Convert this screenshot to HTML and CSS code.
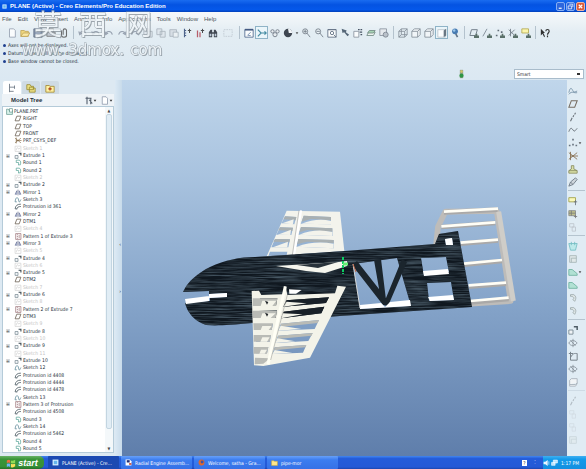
FILE: index.html
```html
<!DOCTYPE html>
<html lang="en">
<head>
<meta charset="utf-8">
<title>PLANE (Active) - Creo Elements/Pro Education Edition</title>
<link rel="stylesheet" href="styles.css">
</head>
<body>
<svg class="defs" aria-hidden="true">
  <symbol id="new" viewBox="0 0 12 12"><path d="M3 1h5l2 2v8H3z" fill="#fff" stroke="#8793a5"/></symbol>
  <symbol id="open" viewBox="0 0 12 12"><path d="M1 10V3h4l1 1h4v6z" fill="#f2d36a" stroke="#b9973c"/><path d="M1 10l3-4h8l-3 4z" fill="#ffe998" stroke="#b9973c"/></symbol>
  <symbol id="save" viewBox="0 0 12 12"><path d="M1 1h10v10H1z" fill="#71829d" stroke="#4d5c75"/><path d="M3 1h6v4H3zM3 7h6v4H3z" fill="#eef3f8"/></symbol>
  <symbol id="print" viewBox="0 0 12 12"><path d="M3 1h6v4H3z" fill="#fff" stroke="#777"/><path d="M1 5h10v5H1z" fill="#b9c0ca" stroke="#666"/></symbol>
  <symbol id="clip" viewBox="0 0 12 12"><path d="M3 3v6a3 2 0 006 0V3a2 2 0 00-4 0v5" fill="none" stroke="#555" stroke-width="1.3"/></symbol>
  <symbol id="undo" viewBox="0 0 12 12"><path d="M2 7c1-4 7-4 8 1M1 4l1 4 3-2" fill="none" stroke="#8b95a5" stroke-width="1.3"/></symbol>
  <symbol id="redo" viewBox="0 0 12 12"><path d="M10 7C9 3 3 3 2 8M11 4l-1 4-3-2" fill="none" stroke="#8b95a5" stroke-width="1.3"/></symbol>
  <symbol id="copy" viewBox="0 0 12 12"><path d="M1 1h6v7H1zM5 4h6v7H5z" fill="#dfe6ec" stroke="#a0a9b3"/></symbol>
  <symbol id="paste" viewBox="0 0 12 12"><path d="M1 2h8v8H1z" fill="#d5dce3" stroke="#a0a9b3"/><path d="M5 5h6v6H5z" fill="#edf1f4" stroke="#a0a9b3"/></symbol>
  <symbol id="regen" viewBox="0 0 12 12"><path d="M3 1v10M3 3h2M3 6h2M3 9h2" stroke="#334a78" stroke-width="1.4"/><path d="M7 3h4M9 1v5" stroke="#333" stroke-width="1.2"/></symbol>
  <symbol id="regen-red" viewBox="0 0 12 12"><path d="M3 3v8M6 5v6" stroke="#b04552" stroke-width="1.5"/><path d="M7 3h4M9 1v5" stroke="#333" stroke-width="1.2"/></symbol>
  <symbol id="find" viewBox="0 0 12 12"><path d="M1 11V5l2-3h2v3h2V2h2l2 3v6H7V7H5v4z" fill="#252b36"/><path d="M2 7h2v3H2zM8 7h2v3H8z" fill="#b9c6d6"/></symbol>
  <symbol id="dots" viewBox="0 0 12 12"><path d="M1 2h10v8H1z" fill="none" stroke="#b9c3cb" stroke-dasharray="2 1"/></symbol>
  <symbol id="repaint" viewBox="0 0 12 12"><path d="M1 2h10v9H1z" fill="#fff" stroke="#35507c"/><path d="M1 2h10" stroke="#27416f" stroke-width="2"/><path d="M4 9l4-4M5 9h3" stroke="#56739e" fill="none"/></symbol>
  <symbol id="spin" viewBox="0 0 12 12"><path d="M1 2l4 4-4 4M5 6h6M9 4l2 2-2 2" fill="none" stroke="#277993" stroke-width="1.4"/></symbol>
  <symbol id="gears" viewBox="0 0 12 12"><g fill="#e8edf0" stroke="#596270"><circle cx="3" cy="4" r="2"/><circle cx="9" cy="4" r="2"/><circle cx="6" cy="8" r="2.5"/></g></symbol>
  <symbol id="shade" viewBox="0 0 12 12"><circle cx="6" cy="6" r="5" fill="#222a35"/><path d="M6 1a5 5 0 015 5H7z" fill="#f5f7fa"/></symbol>
  <symbol id="drop" viewBox="0 0 6 12"><path d="M1 5h4L3 8z" fill="#333"/></symbol>
  <symbol id="zoomin" viewBox="0 0 12 12"><circle cx="5" cy="4" r="3" fill="#eef6fa" stroke="#59636f"/><path d="M7 6l4 5M3 4h4M5 2v4" stroke="#59636f"/></symbol>
  <symbol id="zoomout" viewBox="0 0 12 12"><circle cx="5" cy="4" r="3" fill="#eef6fa" stroke="#59636f"/><path d="M7 6l4 5M3 4h4" stroke="#59636f"/></symbol>
  <symbol id="refit" viewBox="0 0 12 12"><path d="M1 2h10v9H1z" fill="#fff" stroke="#46566c"/><circle cx="6" cy="6" r="2" fill="none" stroke="#46566c"/><path d="M8 8l3 3M1 2h10" stroke="#46566c"/></symbol>
  <symbol id="orient" viewBox="0 0 12 12"><path d="M2 1l1 5 2-1 4 5 2-2-4-3 1-2z" fill="#3e5063"/></symbol>
  <symbol id="views" viewBox="0 0 12 12"><path d="M1 4h6v7H1z" fill="#fff" stroke="#78828f"/><path d="M6 2h2M9 2h2M8 5h3M9 8h2" stroke="#2e3b4d" stroke-width="1.5"/></symbol>
  <symbol id="layers" viewBox="0 0 12 12"><path d="M1 9l2-4h8L9 9z" fill="#eef5ee" stroke="#607a72"/><path d="M2 6l2-3h7L9 6z" fill="#9cd0aa" stroke="#607a72"/></symbol>
  <symbol id="manager" viewBox="0 0 12 12"><path d="M1 1h8v8H1z" fill="#e6e9ed" stroke="#78828f"/><circle cx="8" cy="8" r="3" fill="#b3bac4" stroke="#69727e"/></symbol>
  <symbol id="cube" viewBox="0 0 12 12"><path d="M1 4h7v7H1zM4 1h7v7H4zM1 4l3-3M8 4l3-3M8 11l3-3M1 11l3-3" fill="none" stroke="#727d88"/></symbol>
  <symbol id="cube2" viewBox="0 0 12 12"><path d="M1 4h7v7H1zM1 4l3-3h7v7l-3 3M8 4l3-3" fill="#f4f7f9" stroke="#727d88"/></symbol>
  <symbol id="shaded" viewBox="0 0 12 12"><path d="M1 2h9v9H1z" fill="#fff" stroke="#aeb8c2"/><path d="M8 3l3-2v8l-3 2z" fill="#53606e"/></symbol>
  <symbol id="view3d" viewBox="0 0 12 12"><circle cx="6" cy="4" r="3.5" fill="#2d68a7"/><path d="M7 7l2 4" stroke="#4c6076" stroke-width="2"/><circle cx="5" cy="3" r="1.5" fill="#8ec0e8"/></symbol>
  <symbol id="plane" viewBox="0 0 12 12"><path d="M1 10l3-8h7l-3 8z" fill="none" stroke="#65584b" stroke-width="1.3"/></symbol>
  <symbol id="planeoff" viewBox="0 0 12 12"><path d="M1 9l2-7h7L8 9z" fill="none" stroke="#64707c" stroke-width="1.2"/><path d="M8 7h2v2h2v3H6V9h2z" fill="#435b51"/></symbol>
  <symbol id="axisoff" viewBox="0 0 12 12"><path d="M1 10l5-9" stroke="#64707c"/><path d="M8 7h2v2h2v3H6V9h2z" fill="#435b51"/></symbol>
  <symbol id="pointoff" viewBox="0 0 12 12"><path d="M1 8h2v2H1zM3 2h2v2H3zM7 4h2v2H7z" fill="#4b5662"/><path d="M8 7h2v2h2v3H6V9h2z" fill="#435b51"/></symbol>
  <symbol id="csysoff" viewBox="0 0 12 12"><path d="M1 2l7 7M8 2L1 9M3 1v9" stroke="#59636f"/><path d="M8 7h2v2h2v3H6V9h2z" fill="#435b51"/></symbol>
  <symbol id="noteoff" viewBox="0 0 12 12"><path d="M1 1h8v5H1z" fill="#fff7a0" stroke="#a89b35"/><path d="M8 7h2v2h2v3H6V9h2z" fill="#435b51"/></symbol>
  <symbol id="help" viewBox="0 0 12 12"><path d="M1 1v8l2-2 2 4 1-1-2-4h2z" fill="#111"/><path d="M7 4c0-3 4-3 4 0 0 2-2 2-2 4M9 9v2" fill="none" stroke="#111" stroke-width="1.4"/></symbol>
  <symbol id="csys" viewBox="0 0 12 12"><path d="M1 2l10 8M11 2L1 10M3 1v10M3 6h9" fill="none" stroke="#74562f"/></symbol>
  <symbol id="sketch" viewBox="0 0 12 12"><path d="M1 10c1-9 5-9 6-3s2 3 4-1M1 10h3" fill="none" stroke="#5b8797" stroke-width="1.3"/></symbol>
  <symbol id="hidden" viewBox="0 0 12 12"><path d="M1 2h10v9H1zM3 9c1-6 3-5 4-2l3-2" fill="none" stroke="#c9c9c9"/></symbol>
  <symbol id="extrude" viewBox="0 0 12 12"><path d="M1 6h5v5H1z" fill="#f2f5f7" stroke="#75868f" stroke-width="1.2"/><path d="M7 2h4v4" fill="none" stroke="#36454f" stroke-width="1.8"/></symbol>
  <symbol id="round" viewBox="0 0 12 12"><path d="M3 2h5c3 1 3 4 2 8H6M3 2v4h4v4" fill="none" stroke="#5fa89c" stroke-width="1.3"/></symbol>
  <symbol id="mirror" viewBox="0 0 12 12"><path d="M6 1v10M4 3L1 9h3zM8 3l3 6H8z" fill="#dce5ff" stroke="#566087"/></symbol>
  <symbol id="protrude" viewBox="0 0 12 12"><path d="M1 10C2 4 5 2 11 2M4 11c0-4 3-5 7-5M1 10h3" fill="none" stroke="#4d5c64" stroke-width="1.4"/></symbol>
  <symbol id="pattern" viewBox="0 0 12 12"><path d="M2 1h9v10H2zM4 3h2M4 6h2M4 9h2M8 3v6" fill="#fff" stroke="#84535a"/></symbol>
  <symbol id="part" viewBox="0 0 12 12"><path d="M1 2h3l1 2h6v7H1z" fill="#d8f2ea" stroke="#467f77"/><path d="M6 1h5v6H6z" fill="#fff" stroke="#467f77"/></symbol>
  <symbol id="tools" viewBox="0 0 12 12"><path d="M2 3h8M4 1v10M9 3v8M7 5l4 5" stroke="#56616e" stroke-width="1.5"/></symbol>
  <symbol id="tree" viewBox="0 0 12 12"><path d="M3 1v10M3 5h6M3 10h5M9 3v4" fill="none" stroke="#68727f"/></symbol>
  <symbol id="folders" viewBox="0 0 12 12"><path d="M1 2h4l1 2h3v4H1zM4 5h3l1 1h3v5H4z" fill="#ede283" stroke="#998b35"/></symbol>
  <symbol id="star" viewBox="0 0 12 12"><path d="M1 3h4l1 1h5v7H1z" fill="#fff1a1" stroke="#a18936"/><path d="M6 5v4M4 7h4" stroke="#aa3b18" stroke-width="1.5"/></symbol>
  <symbol id="curve" viewBox="0 0 12 12"><path d="M1 8c2-9 4-4 5-2s3 1 5 0M1 10c4-5 6-1 10-2" fill="none" stroke="#608098"/></symbol>
  <symbol id="axis" viewBox="0 0 12 12"><path d="M3 11l2-4M6 6l1-2M8 3l1-2" stroke="#545b63" stroke-width="1.3"/></symbol>
  <symbol id="wave" viewBox="0 0 12 12"><path d="M1 8c2-5 3-5 5-2s3 0 5-2" fill="none" stroke="#545b63" stroke-width="1.2"/></symbol>
  <symbol id="points" viewBox="0 0 12 12"><path d="M5 1h2v2H5zM1 8h2v2H1zM5 7h2v2H5zM9 8h2v2H9z" fill="#56616e"/></symbol>
  <symbol id="analysis" viewBox="0 0 12 12"><path d="M1 11V8l3-2V2h3v4l4 2v3z" fill="#d9df9c" stroke="#777a43"/><path d="M1 8h10" stroke="#777a43"/></symbol>
  <symbol id="pencil" viewBox="0 0 12 12"><path d="M1 11l2-5 6-5 2 2-5 6zM3 6l3 3" fill="#cad1d7" stroke="#56616e"/></symbol>
  <symbol id="note" viewBox="0 0 12 12"><path d="M1 2h8v5H1z" fill="#fffbb0" stroke="#929025"/><path d="M7 7h4M9 5v6" stroke="#545b63"/></symbol>
  <symbol id="grid" viewBox="0 0 12 12"><path d="M1 2h8v6H1z" fill="#b9b97b" stroke="#777"/><path d="M4 2v6M1 5h8M9 7v4M7 9h4" stroke="#666"/></symbol>
  <symbol id="faint" viewBox="0 0 12 12"><path d="M2 2h5v4H2zM5 6h4v5H5z" fill="none" stroke="#b8bec5"/></symbol>
  <symbol id="hole" viewBox="0 0 12 12"><path d="M1 3h10L9 11H3zM4 1v4M8 1v4" fill="#b7e9e9" stroke="#62b5ba"/></symbol>
  <symbol id="shell" viewBox="0 0 12 12"><path d="M2 2h8v8H2zM4 5h6M4 5v5" fill="#e1e8e7" stroke="#9aaaa9"/></symbol>
  <symbol id="rib" viewBox="0 0 12 12"><path d="M1 10V3h4l6 5v2z" fill="#a9e0cf" stroke="#5aa791"/></symbol>
  <symbol id="bend" viewBox="0 0 12 12"><path d="M3 2h4c3 2 3 5 1 8L6 8c2-2 1-4-3-4z" fill="#e1e8e7" stroke="#8b9999"/></symbol>
  <symbol id="rotate" viewBox="0 0 12 12"><path d="M1 6c2-4 7-4 10 0-3 4-8 4-10 0M6 1v10M3 3l6 6" fill="none" stroke="#78828b"/></symbol>
  <symbol id="sweep" viewBox="0 0 12 12"><path d="M3 1v10h8M3 8c3-6 5-5 8-5v8M1 3h5" fill="none" stroke="#68727c" stroke-width="1.2"/></symbol>
  <symbol id="box" viewBox="0 0 12 12"><path d="M2 4l2-2h7v6l-2 3H2zM2 9h7l2-2" fill="#f4f6f7" stroke="#9aa4ad"/></symbol>
  <symbol id="flag" viewBox="0 0 12 12"><path d="M1 3q3-2 4 0v3q-2-1-4 0z" fill="#f06d3d"/><path d="M6 3q2 1 5-1v4q-3 1-5 0z" fill="#90db55"/><path d="M1 7q3-1 4 0v4q-2-2-4 0z" fill="#6db4f5"/><path d="M6 7q2 1 5 0v3q-2 2-5 1z" fill="#fade57"/></symbol>
  <symbol id="app" viewBox="0 0 12 12"><path d="M1 1h10v10H1z" fill="#d7f0ff"/><path d="M3 3h6v6H3z" fill="#65b4ec"/></symbol>
  <symbol id="doc" viewBox="0 0 12 12"><path d="M1 1h7l3 3v7H1z" fill="#fff"/><path d="M3 2h5v4H3z" fill="#202e75"/><path d="M7 7h4v3H7z" fill="#cf5139"/></symbol>
  <symbol id="fox" viewBox="0 0 12 12"><circle cx="6" cy="6" r="5" fill="#e0672d"/><circle cx="7" cy="5" r="2.5" fill="#3e55a5"/></symbol>
  <symbol id="folder" viewBox="0 0 12 12"><path d="M1 3h4l1 1h5v7H1z" fill="#ffe78b" stroke="#c8aa40"/></symbol>
  <symbol id="cancel" viewBox="0 0 12 12"><path d="M3 3l6 6M9 3l-6 6" stroke="#fff" stroke-width="2"/></symbol>
  <symbol id="min" viewBox="0 0 12 12"><path d="M3 9h5" stroke="#fff" stroke-width="2"/></symbol>
  <symbol id="restore" viewBox="0 0 12 12"><path d="M4 2h6v5M2 5h6v5H2z" fill="none" stroke="#fff" stroke-width="1.3"/></symbol>
  <symbol id="sound" viewBox="0 0 12 12"><path d="M1 4h3l4-3v10L4 8H1z" fill="#e9f5ff"/><path d="M10 3v6" stroke="#fff"/></symbol>
  <symbol id="net" viewBox="0 0 12 12"><path d="M4 1h7v5H4zM1 5h6v5H1z" fill="#b8e3ff" stroke="#fff"/></symbol>
</svg>

<header class="titlebar">
  <svg class="icon"><use href="#app"/></svg>
  <h1>PLANE (Active) - Creo Elements/Pro Education Edition</h1>
  <button aria-label="Minimize"><svg><use href="#min"/></svg></button>
  <button aria-label="Restore"><svg><use href="#restore"/></svg></button>
  <button class="close" aria-label="Close"><svg><use href="#cancel"/></svg></button>
</header>

<section class="top">
  <nav class="menu">
    <button>File</button><button>Edit</button><button>View</button><button>Insert</button><button>Analysis</button><button>Info</button><button>Applications</button><button>Tools</button><button>Window</button><button>Help</button>
  </nav>
  <div class="toolbar">
    <div class="group">
      <button aria-label="New"><svg><use href="#new"/></svg></button>
      <button aria-label="Open"><svg><use href="#open"/></svg></button>
      <button aria-label="Save"><svg><use href="#save"/></svg></button>
      <button aria-label="Print"><svg><use href="#print"/></svg></button>
      <button aria-label="Attach"><svg><use href="#clip"/></svg></button>
    </div>
    <div class="group">
      <button aria-label="Undo"><svg><use href="#undo"/></svg></button>
      <button aria-label="Previous"><svg><use href="#undo"/></svg></button>
      <button aria-label="Next"><svg><use href="#undo"/></svg></button>
      <button aria-label="Redo"><svg><use href="#redo"/></svg></button>
      <button aria-label="Cut"><svg><use href="#redo"/></svg></button>
      <button aria-label="Duplicate"><svg><use href="#copy"/></svg></button>
      <button aria-label="Copy"><svg><use href="#copy"/></svg></button>
      <button aria-label="Paste"><svg><use href="#paste"/></svg></button>
      <button aria-label="Regenerate"><svg><use href="#regen"/></svg></button>
      <button aria-label="Regenerate manager"><svg><use href="#regen-red"/></svg></button>
      <button aria-label="Find"><svg><use href="#find"/></svg></button>
      <button class="wide" aria-label="Selection"><svg><use href="#dots"/></svg></button>
    </div>
    <div class="group">
      <button aria-label="Repaint"><svg><use href="#repaint"/></svg></button>
      <button class="on" aria-label="Spin center"><svg><use href="#spin"/></svg></button>
      <button aria-label="Orient mode"><svg><use href="#gears"/></svg></button>
      <button aria-label="Appearance"><svg><use href="#shade"/></svg></button>
      <button class="slim" aria-label="Appearance list"><svg><use href="#drop"/></svg></button>
      <button aria-label="Zoom in"><svg><use href="#zoomin"/></svg></button>
      <button aria-label="Zoom out"><svg><use href="#zoomout"/></svg></button>
      <button aria-label="Refit"><svg><use href="#refit"/></svg></button>
      <button aria-label="Reorient"><svg><use href="#orient"/></svg></button>
      <button aria-label="Saved views"><svg><use href="#views"/></svg></button>
      <button aria-label="Layers"><svg><use href="#layers"/></svg></button>
      <button aria-label="View manager"><svg><use href="#manager"/></svg></button>
    </div>
    <div class="group">
      <button aria-label="Wireframe"><svg><use href="#cube"/></svg></button>
      <button aria-label="Hidden line"><svg><use href="#cube2"/></svg></button>
      <button aria-label="No hidden"><svg><use href="#cube2"/></svg></button>
      <button class="on" aria-label="Shading"><svg><use href="#shaded"/></svg></button>
      <button aria-label="Enhanced realism"><svg><use href="#view3d"/></svg></button>
    </div>
    <div class="group">
      <button aria-label="Plane display"><svg><use href="#planeoff"/></svg></button>
      <button aria-label="Axis display"><svg><use href="#axisoff"/></svg></button>
      <button aria-label="Point display"><svg><use href="#pointoff"/></svg></button>
      <button aria-label="Csys display"><svg><use href="#csysoff"/></svg></button>
      <button aria-label="Annotation display"><svg><use href="#noteoff"/></svg></button>
    </div>
    <div class="group">
      <button aria-label="Help"><svg><use href="#help"/></svg></button>
    </div>
  </div>
  <ul class="messages">
    <li>Axes will not be displayed.</li>
    <li>Datum planes will not be displayed.</li>
    <li>Base window cannot be closed.</li>
  </ul>
  <div class="filter">
    <svg class="light" viewBox="0 0 6 12"><path d="M1 1h4v10H1z" fill="#9aa58c"/><circle cx="3" cy="3" r="1.5" fill="#d2c569"/><circle cx="3" cy="8" r="2.5" fill="#2f9545"/></svg>
    <select aria-label="Selection filter"><option>Smart</option></select>
  </div>
  <div class="watermark" aria-hidden="true">
    <div class="mark-name"><span>莫</span><span>西</span><span>网</span></div>
    <div class="mark-site"><span>www.</span><span>3dmox.</span><span>com</span></div>
  </div>
</section>

<main>
  <aside class="side">
    <div class="tabs">
      <button class="tab current" aria-label="Model tree"><svg><use href="#tree"/></svg></button>
      <button class="tab" aria-label="Folder browser"><svg><use href="#folders"/></svg></button>
      <button class="tab" aria-label="Favorites"><svg><use href="#star"/></svg></button>
    </div>
    <div class="treehead">
      <h2>Model Tree</h2>
      <button aria-label="Settings"><svg><use href="#tools"/></svg><svg class="arrow"><use href="#drop"/></svg></button>
      <button aria-label="Show"><svg><use href="#new"/></svg><svg class="arrow"><use href="#drop"/></svg></button>
    </div>
    <div class="treebox">
      <ul class="tree">
        <li class="root"><svg><use href="#part"/></svg>PLANE.PRT</li>
        <li><svg><use href="#plane"/></svg>RIGHT</li>
        <li><svg><use href="#plane"/></svg>TOP</li>
        <li><svg><use href="#plane"/></svg>FRONT</li>
        <li><svg><use href="#csys"/></svg>PRT_CSYS_DEF</li>
        <li class="off"><svg><use href="#hidden"/></svg>Sketch 1</li>
        <li class="more"><svg><use href="#extrude"/></svg>Extrude 1</li>
        <li><svg><use href="#round"/></svg>Round 1</li>
        <li><svg><use href="#round"/></svg>Round 2</li>
        <li class="off"><svg><use href="#hidden"/></svg>Sketch 2</li>
        <li class="more"><svg><use href="#extrude"/></svg>Extrude 2</li>
        <li class="more"><svg><use href="#mirror"/></svg>Mirror 1</li>
        <li><svg><use href="#sketch"/></svg>Sketch 3</li>
        <li><svg><use href="#protrude"/></svg>Protrusion id 361</li>
        <li class="more"><svg><use href="#mirror"/></svg>Mirror 2</li>
        <li><svg><use href="#plane"/></svg>DTM1</li>
        <li class="off"><svg><use href="#hidden"/></svg>Sketch 4</li>
        <li class="more"><svg><use href="#pattern"/></svg>Pattern 1 of Extrude 3</li>
        <li class="more"><svg><use href="#mirror"/></svg>Mirror 3</li>
        <li class="off"><svg><use href="#hidden"/></svg>Sketch 5</li>
        <li class="more"><svg><use href="#extrude"/></svg>Extrude 4</li>
        <li class="off"><svg><use href="#hidden"/></svg>Sketch 6</li>
        <li class="more"><svg><use href="#extrude"/></svg>Extrude 5</li>
        <li><svg><use href="#plane"/></svg>DTM2</li>
        <li class="off"><svg><use href="#hidden"/></svg>Sketch 7</li>
        <li class="more"><svg><use href="#extrude"/></svg>Extrude 6</li>
        <li class="off"><svg><use href="#hidden"/></svg>Sketch 8</li>
        <li class="more"><svg><use href="#pattern"/></svg>Pattern 2 of Extrude 7</li>
        <li><svg><use href="#plane"/></svg>DTM3</li>
        <li class="off"><svg><use href="#hidden"/></svg>Sketch 9</li>
        <li class="more"><svg><use href="#extrude"/></svg>Extrude 8</li>
        <li class="off"><svg><use href="#hidden"/></svg>Sketch 10</li>
        <li class="more"><svg><use href="#extrude"/></svg>Extrude 9</li>
        <li class="off"><svg><use href="#hidden"/></svg>Sketch 11</li>
        <li class="more"><svg><use href="#extrude"/></svg>Extrude 10</li>
        <li><svg><use href="#sketch"/></svg>Sketch 12</li>
        <li><svg><use href="#protrude"/></svg>Protrusion id 4408</li>
        <li><svg><use href="#protrude"/></svg>Protrusion id 4444</li>
        <li><svg><use href="#protrude"/></svg>Protrusion id 4478</li>
        <li><svg><use href="#sketch"/></svg>Sketch 13</li>
        <li class="more"><svg><use href="#pattern"/></svg>Pattern 3 of Protrusion</li>
        <li><svg><use href="#protrude"/></svg>Protrusion id 4508</li>
        <li><svg><use href="#round"/></svg>Round 3</li>
        <li><svg><use href="#sketch"/></svg>Sketch 14</li>
        <li><svg><use href="#protrude"/></svg>Protrusion id 5462</li>
        <li><svg><use href="#round"/></svg>Round 4</li>
        <li><svg><use href="#round"/></svg>Round 5</li>
      </ul>
      <div class="scroll"><span>▲</span><i></i><span>▼</span></div>
    </div>
  </aside>
  <div class="splitter"><span>‹</span><span>›</span></div>

  <section class="viewport">
    <svg class="model" viewBox="122 80 445 376" role="img" aria-label="Plane model">
      <defs>
        <filter id="grain" x="0" y="0" width="1" height="1" color-interpolation-filters="sRGB">
          <feTurbulence type="fractalNoise" baseFrequency=".03 .7" numOctaves="3" seed="4"/>
          <feColorMatrix values="0 0 0 0 .3  0 0 0 0 .37  0 0 0 0 .42  1.8 0 0 0 -.65"/>
          <feComposite in2="SourceGraphic" operator="in" result="g"/>
          <feMerge><feMergeNode in="SourceGraphic"/><feMergeNode in="g"/></feMerge>
        </filter>
      </defs>
      <!-- upper wing -->
      <g transform="translate(175 195) scale(.33333)">
        <path fill="#f3f3ec" fill-rule="evenodd" d="M335 47L495 50L508 168L275 184ZM386 62L468 66L468 88L377 86ZM378 96L472 100L473 123L370 119ZM370 132L476 135L477 160L363 155ZM330 64L364 66L358 88L319 85ZM315 97L354 98L349 120L304 119ZM300 132L345 133L340 157L289 157ZM285 170L337 170L335 180L280 183Z"/>
        <path fill="#a9b0b2" d="M386 62l82 4v10l-60-4-28 8zM378 96l94 4v10l-75-5-24 7zM370 132l106 3v9l-80-4-30 8zM330 64l34 2-2 10-36-3zM315 97l39 1-2 10-42-2zM300 132l45 1-2 9-48-2z"/>
        <path fill="#f3f3ec" d="M380 86q45-18 88-8v10zM373 119q48-20 99-8v12zM366 155q50-19 110-9v14zM322 85l34-12-2 15zM308 119l40-15-2 16zM294 157l45-17-2 17z"/>
        <path d="M378 46L357 180" stroke="#fff" stroke-width="7"/><path d="M372 46L352 180" stroke="#aaa" stroke-width="2"/>
      </g>
      <!-- tail -->
      <g transform="translate(340 195) scale(.33333)">
        <path d="M288 152L294 95L316 50L470 48L512 318L392 326" fill="none" stroke="#bebcb9" stroke-width="17" stroke-linejoin="round"/>
        <path d="M476 50L520 318" stroke="#cfcdc8" stroke-width="15"/>
        <path d="M304 96L466 84M362 146L474 136M372 209L486 198M386 275L498 266M390 322L506 312M312 52L472 44" stroke="#aaa9a8" stroke-width="14"/>
        <path d="M304 94L466 82M362 143L474 134M372 206L486 195M386 271L498 263M390 318L506 308M312 50L474 41" stroke="#fffef6" stroke-width="8"/>
      </g>
      <!-- fuselage -->
      <path filter="url(#grain)" fill="#101820" fill-rule="evenodd" d="M183 292C188 281 198 273 210 267C225 260 240 257 255 257L345 251L435 244L439 234L458 231L472 307L340 316L252 323C230 325 216 326 206 325C194 321 187 312 185 303L210 301V298L227 297V293L209 294V291ZM353 264L397 258L411 306L360 309ZM421 258L446 257L449 272L424 276ZM427 283L451 282L454 300L429 301ZM445 239L452 238L453 245L446 245Z"/>
      <path fill="#1b252d" d="M352 265L357 261L386 298L402 259L407 262L388 306L383 305ZM374 260L381 259L386 300L381 300Z"/>
      <path fill="#fff" d="M185 299L209 296V301L186 304ZM209 294L227 293V297L209 298ZM360 305L381 303L385 307L390 302L410 300L411 306L360 309ZM423 271L448 269L449 274L424 276ZM428 297L453 295L454 300L430 301ZM445 239L452 238L453 245L446 245Z"/>
      <path fill="none" stroke="#d7d9d9" d="M353 264L360 308"/>
      <path fill="#f6f6ee" d="M276 266L339 262L347 261V266L325 273L306 271Z"/>
      <path fill="#28323a" d="M297 265L338 262L318 268Z"/>
      <path d="M343 257V274" stroke="#0ccc62" stroke-width="2" stroke-dasharray="3 1"/><path d="M343 264h5" stroke="#65ec75" stroke-width="3"/><path d="M353 264l3 8" stroke="#c16646"/>
      <!-- lower wing -->
      <g transform="translate(175 195) scale(.33333)">
        <path fill="#f3f3e9" fill-rule="evenodd" d="M230 288L252 287L259 300L325 298L332 272L337 300L480 295L487 272L513 275L405 488L265 513L237 511ZM334 316L462 307L453 324L325 335ZM326 350L448 335L439 355L318 370ZM318 386L432 375L419 402L309 407ZM309 422L413 414L400 438L301 444ZM299 457L394 450L384 473L292 477ZM255 310L307 310L303 333L250 333ZM250 348L306 346L302 369L246 369ZM248 387L294 387L290 405L245 405ZM246 420L288 420L284 440L243 440ZM244 456L280 456L276 475L242 475Z"/>
        <path fill="#182028" d="M334 316L462 307L453 324L325 335ZM326 350L448 335L439 355L318 370Z"/>
        <path fill="#b9bbb6" d="M233 310h74l-4 23h-70zM234 347h72l-4 22h-68zM235 385h59l-4 20h-54zM236 420h52l-4 20h-48zM236 456h44l-4 20h-40zM240 488l45 2-20 16-26 2zM318 386l114-11-4 9-111 12zM309 422l104-8-3 8-102 10zM299 457l95-7-3 7-94 9z"/>
        <path fill="#f3f3e9" d="M262 317h42l-12 16h-35zM262 355h40l-15 14h-30zM262 393h28l-9 12h-24zM262 427h22l-8 13h-20zM258 464h18l-7 12h-16zM325 335l70-10-60-5zM318 370l65-12-60-3zM309 407l70-5-62-10zM301 444l60-5-54-9zM292 477l60-3-53-9z"/>
        <path d="M270 317l10 4-4 8zM270 353l10 4-4 8z" fill="#202529"/>
        <path d="M331 274L279 508" stroke="#fffff5" stroke-width="9"/><path d="M337 300L287 495" stroke="#a9aaa5" stroke-width="2"/>
        <path d="M342 283L380 285L363 296H343Z" fill="#fff"/>
      </g>
    </svg>
  </section>

  <div class="features">
    <div class="set">
      <button aria-label="Style"><svg><use href="#curve"/></svg></button>
      <button aria-label="Datum plane"><svg><use href="#plane"/></svg></button>
      <button aria-label="Datum axis"><svg><use href="#axis"/></svg></button>
      <button aria-label="Datum curve"><svg><use href="#wave"/></svg></button>
      <button aria-label="Datum point"><svg><use href="#points"/></svg><svg class="arrow"><use href="#drop"/></svg></button>
      <button aria-label="Coordinate system"><svg><use href="#csys"/></svg></button>
      <button aria-label="Analysis"><svg><use href="#analysis"/></svg></button>
      <button aria-label="Sketch"><svg><use href="#pencil"/></svg></button>
    </div>
    <div class="set">
      <button aria-label="Annotation"><svg><use href="#note"/></svg></button>
      <button aria-label="Propagate"><svg><use href="#grid"/></svg></button>
      <button aria-label="Reference"><svg><use href="#faint"/></svg></button>
    </div>
    <div class="set">
      <button aria-label="Hole"><svg><use href="#hole"/></svg></button>
      <button aria-label="Shell"><svg><use href="#shell"/></svg></button>
      <button aria-label="Rib"><svg><use href="#rib"/></svg><svg class="arrow"><use href="#drop"/></svg></button>
      <button aria-label="Draft"><svg><use href="#rib"/></svg></button>
      <button aria-label="Round"><svg><use href="#bend"/></svg></button>
      <button aria-label="Chamfer"><svg><use href="#bend"/></svg></button>
    </div>
    <div class="set">
      <button aria-label="Extrude"><svg><use href="#extrude"/></svg></button>
      <button aria-label="Revolve"><svg><use href="#rotate"/></svg></button>
      <button aria-label="Sweep"><svg><use href="#sweep"/></svg></button>
      <button aria-label="Blend"><svg><use href="#rotate"/></svg></button>
      <button aria-label="Boundary"><svg><use href="#box"/></svg></button>
    </div>
    <div class="set dim">
      <button aria-label="Mirror"><svg><use href="#axis"/></svg></button>
      <button aria-label="Merge"><svg><use href="#faint"/></svg></button>
      <button aria-label="Trim"><svg><use href="#faint"/></svg></button>
      <button aria-label="Pattern"><svg><use href="#shell"/></svg></button>
    </div>
  </div>
</main>

<footer class="taskbar">
  <button class="start"><svg><use href="#flag"/></svg>start</button>
  <div class="tasks">
    <button class="active"><svg><use href="#app"/></svg><span>PLANE (Active) - Cre...</span></button>
    <button><svg><use href="#doc"/></svg><span>Radial Engine Assemb...</span></button>
    <button><svg><use href="#fox"/></svg><span>Welcome, satha - Gra...</span></button>
    <button><svg><use href="#folder"/></svg><span>pipe-mor</span></button>
  </div>
  <span class="lang">?</span>
  <span class="keys">⁚</span>
  <div class="tray"><svg><use href="#sound"/></svg><svg><use href="#net"/></svg><time>1:17 PM</time></div>
</footer>
</body>
</html>
```

FILE: styles.css
```css
* { box-sizing: border-box; }

body {
  margin: 0;
  height: 100vh;
  display: flex;
  flex-direction: column;
  overflow: hidden;
  background: #dde9f2;
  color: #25303a;
  font: 5px/7px "DejaVu Sans Condensed", "Liberation Sans", sans-serif;
}

.defs { position: absolute; width: 0; height: 0; }
ul { list-style: none; margin: 0; padding: 0; }
h1, h2 { margin: 0; font: bold 6px/8px "Liberation Sans", sans-serif; }
button {
  margin: 0;
  padding: 0;
  border: 0;
  background: none;
  color: inherit;
  font: inherit;
  display: flex;
  align-items: center;
  justify-content: center;
}
svg { display: block; flex: none; }
button svg { width: 10px; height: 10px; }
button .arrow { width: 4px; height: 8px; }

/* Title bar */
.titlebar {
  flex: none;
  display: flex;
  align-items: center;
  gap: 1px;
  height: 12px;
  padding: 0 1px 0 2px;
  background: linear-gradient(#1a6cf0, #0453e2 40%, #0558ea 80%, #0440b8);
  color: #fff;
}
.titlebar .icon { width: 5px; height: 5px; }
.titlebar h1 { flex: 1; margin-left: 2px; }
.titlebar button {
  width: 9px;
  height: 9px;
  border: 1px solid #86aef3;
  border-radius: 2px;
  background: #2d66dd;
}
.titlebar button svg { width: 7px; height: 7px; }
.titlebar .close { background: #dc5a3a; border-color: #eeb5a5; }

/* Menu, toolbar and messages */
.top {
  position: relative;
  flex: none;
  height: 68px;
  background: linear-gradient(#f6f8fa, #e3edf3 20px, #dbe8f2);
}
.menu {
  display: flex;
  gap: 6px;
  height: 13px;
  padding: 1px 2px 0;
  align-items: center;
  color: #4a545d;
  font: 6px/8px "Liberation Sans", sans-serif;
}
.toolbar { display: flex; height: 15px; padding-left: 5px; align-items: center; }
.toolbar svg, .features svg { opacity: .85; }
.group { display: flex; }
.group + .group { margin-left: 3px; padding-left: 2px; border-left: 1px solid #b4c2cd; }
.group button { width: 13px; height: 13px; }
.group .wide { width: 17px; }
.group .slim { width: 5px; }
.group .slim svg { width: 4px; }
.group .on { border: 1px solid #8fb3c7; background: #eaf5fa; }
.messages { padding: 1px 3px; line-height: 8px; }
.messages li { display: flex; align-items: center; gap: 2px; }
.messages li::before { content: ""; width: 3px; height: 3px; border-radius: 50%; background: #20408f; }
.filter {
  position: absolute;
  right: 2px;
  bottom: 1px;
  display: flex;
  align-items: center;
  gap: 50px;
}
.light { width: 5px; height: 10px; }
.filter select {
  width: 70px;
  height: 10px;
  padding: 0 2px;
  border: 1px solid #a9bccb;
  border-radius: 0;
  appearance: none;
  background: linear-gradient(#333, #333) right 3px center / 3px 2px no-repeat #fff;
  color: #333;
  font: inherit;
}

/* Outlined site mark over the header */
.watermark {
  position: absolute;
  left: 22px;
  top: -7px;
  color: #f1f6f9;
  -webkit-text-stroke: 1px #8a949c;
  paint-order: stroke fill;
  text-shadow: 1px 1px #8a949c;
  opacity: .8;
  pointer-events: none;
}
.mark-name {
  display: flex;
  gap: 17px;
  padding-left: 12px;
  font: 28px/36px "Noto Sans CJK SC", sans-serif;
}
.mark-site {
  display: flex;
  gap: 6px;
  font: 15px/18px "DejaVu Sans", sans-serif;
}

/* Work area */
main { flex: 1; min-height: 0; display: flex; }
.side {
  width: 115px;
  flex: none;
  display: flex;
  flex-direction: column;
  padding: 0 1px 3px 2px;
}
.tabs { display: flex; height: 14px; gap: 1px; padding: 1px 1px 0; }
.tab { width: 18px; border-radius: 2px 2px 0 0; background: #cfdbe4; }
.tab.current { background: #fff; }
.treehead { display: flex; gap: 3px; height: 12px; align-items: center; padding: 0 1px 0 9px; background: #eef3f7; }
.treehead h2 { flex: 1; }
.treehead button svg { width: 9px; height: 9px; }
.treehead button .arrow { width: 4px; }
.treebox { flex: 1; min-height: 0; display: flex; border: 1px solid #b5cbd9; background: #fff; }
.tree {
  flex: 1;
  min-width: 0;
  display: grid;
  grid-auto-rows: minmax(0, 1fr);
  padding: 1px 0 0 3px;
  white-space: nowrap;
}
.tree li { display: flex; align-items: center; gap: 1px; }
.tree li::before { content: ""; width: 7px; flex: none; }
.tree .root::before { display: none; }
.tree .more::before { content: "+"; width: 4px; height: 4px; margin-right: 3px; background: #d8dcde; color: #555; line-height: 4px; text-align: center; }
.tree svg { width: 8px; height: 7px; }
.tree .root svg { width: 7px; }
.tree .off { color: #c3c3c3; }
.scroll { width: 8px; display: flex; flex-direction: column; align-items: center; background: #f4f8fa; color: #444; font-size: 4px; }
.scroll i { width: 6px; flex: 1; margin-bottom: 16px; border: 1px solid #c3d5e1; border-radius: 2px; background: #e1edf5; }
.splitter {
  width: 7px;
  flex: none;
  display: flex;
  flex-direction: column;
  justify-content: center;
  align-items: flex-end;
  gap: 40px;
  padding-right: 1px;
  background: linear-gradient(90deg, #dbe9f4, #c8dbea);
}
.viewport {
  flex: 1;
  min-width: 0;
  background: linear-gradient(#c0d6eb, #a9c3df 25%, #86a5ca 58%, #5f7eab);
}
.model { width: 100%; height: 100%; }
.features { width: 19px; flex: none; padding: 4px 1px 0; background: #e0ecf4; }
.set { padding-bottom: 2px; }
.set + .set { padding-top: 3px; border-top: 1px solid #b5c4cf; }
.set button { height: 13px; }
.set.dim { opacity: .4; }

/* Taskbar */
.taskbar {
  flex: none;
  display: flex;
  height: 13px;
  background: linear-gradient(#4387ef, #245cda 20%, #2459d6 85%, #1c46ae);
  color: #fff;
  line-height: 12px;
}
.start {
  width: 44px;
  gap: 2px;
  border-radius: 0 5px 5px 0;
  background: linear-gradient(#68b267, #389438 25%, #379037 80%, #236f26);
  font: italic bold 9px/12px "Liberation Sans", sans-serif;
}
.tasks { flex: 1; display: flex; gap: 2px; padding-left: 4px; }
.tasks button {
  width: 71px;
  justify-content: flex-start;
  gap: 3px;
  padding-left: 4px;
  border-radius: 1px;
  background: linear-gradient(#66a0fa, #3c7df0 30%, #3671e6);
}
.tasks svg { width: 7px; height: 7px; }
.tasks .active { background: #1b49b2; }
.lang { align-self: center; width: 5px; height: 6px; background: #fff; color: #222; line-height: 6px; text-align: center; }
.keys { width: 16px; text-align: center; }
.tray {
  display: flex;
  align-items: center;
  gap: 1px;
  width: 43px;
  background: linear-gradient(#3fb0f2, #139aea 25%, #148fe0);
}
.tray svg { width: 7px; height: 8px; }
.tray time { margin-left: 2px; }
```
